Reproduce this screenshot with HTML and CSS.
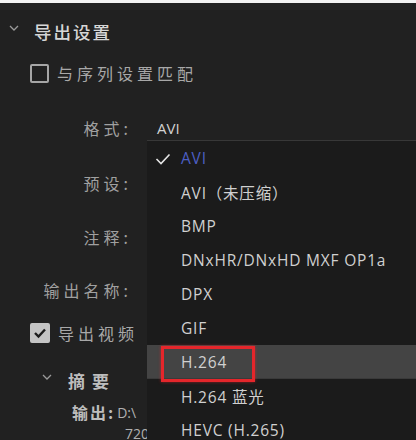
FILE: index.html
```html
<!DOCTYPE html>
<html>
<head>
<meta charset="utf-8">
<link rel="stylesheet" href="styles.css">
</head>
<body>
<div class="topbar"></div>
<div class="panel">
  <div class="row header">
    <svg class="chev" width="10" height="6" viewBox="0 0 10 6"><path d="M1 1 L5 5 L9 1" fill="none" stroke="#9a9a9a" stroke-width="1.3"/></svg>
    <span class="title">导出设置</span>
  </div>
  <div class="row match">
    <span class="box"></span>
    <span class="cbtext">与序列设置匹配</span>
  </div>
  <div class="row field r-format">
    <span class="label">格式:</span>
    <span class="value">AVI</span>
  </div>
  <div class="row field r-preset"><span class="label">预设:</span></div>
  <div class="row field r-note"><span class="label">注释:</span></div>
  <div class="row field r-name"><span class="label">输出名称:</span></div>
  <div class="row match r-video">
    <span class="box checked"><svg width="14" height="12" viewBox="0 0 14 12"><path d="M2 6 L5.5 9.5 L12 2.5" fill="none" stroke="#1d1d1d" stroke-width="2.4"/></svg></span>
    <span class="cbtext">导出视频</span>
  </div>
  <div class="row r-summary">
    <svg class="chev2" width="10" height="6" viewBox="0 0 10 6"><path d="M1 1 L5 5 L9 1" fill="none" stroke="#9a9a9a" stroke-width="1.3"/></svg>
    <span class="sumtitle">摘要</span>
  </div>
  <div class="row r-out"><span class="outlabel">输出:</span><span class="outval">D:\</span></div>
  <div class="row r-720"><span class="outval">720</span></div>
</div>

<div class="menu">
  <div class="item checked-item"><svg class="tick" width="16" height="12" viewBox="0 0 16 12"><path d="M1.5 6 L6 10.5 L14.5 1.5" fill="none" stroke="#e6e6e6" stroke-width="1.6"/></svg>AVI</div>
  <div class="item">AVI（未压缩）</div>
  <div class="item">BMP</div>
  <div class="item">DNxHR/DNxHD MXF OP1a</div>
  <div class="item">DPX</div>
  <div class="item">GIF</div>
  <div class="item hl">H.264<span class="redbox"></span></div>
  <div class="item">H.264 蓝光</div>
  <div class="item">HEVC (H.265)</div>
</div>
</body>
</html>
```
FILE: styles.css
```css
* { box-sizing: border-box; }
html, body {
  margin: 0;
  padding: 0;
  width: 416px;
  height: 440px;
  overflow: hidden;
  background: #212121;
  font-family: "Noto Sans CJK SC", "Noto Sans", sans-serif;
  color: #a8a8a8;
  position: relative;
}
.topbar { height: 3px; background: #f2f2f2; }
.panel { display: flex; flex-direction: column; }
.row { display: flex; align-items: center; height: 28px; }
.header { margin-top: 14px; }
.chev { margin-left: 9px; margin-right: 15px; margin-top: -6px; }
.title { font-size: 17.5px; letter-spacing: 2px; color: #d6d6d6; font-weight: 500; }
.match { margin-top: 14px; padding-left: 30px; }
.box {
  width: 19px; height: 19px;
  border: 2px solid #a6a6a6;
  border-radius: 2px;
  margin-right: 8px;
  display: flex; align-items: center; justify-content: center;
}
.box.checked { background: #c4c4c4; border-color: #c4c4c4; width: 20px; height: 20px; }
.cbtext { font-size: 16px; letter-spacing: 4px; color: #a8a8a8; }
.label {
  width: 132px;
  text-align: right;
  font-size: 16px;
  letter-spacing: 4px;
  color: #a0a0a0;
}
.value {
  margin-left: 25px;
  font-family: "Open Sans", "Noto Sans", sans-serif;
  font-size: 15px;
  color: #d2d2d2;
}
.r-format { margin-top: 27px; }
.r-preset { margin-top: 27px; }
.r-note { margin-top: 26px; }
.r-name { margin-top: 25px; }
.r-video { margin-top: 15px; }
.r-summary { margin-top: 19px; }
.chev2 { margin-left: 42px; margin-right: 16px; margin-top: -6px; }
.sumtitle { font-size: 17px; font-weight: bold; letter-spacing: 7px; color: #bdbdbd; }
.r-out { margin-top: 8px; height: 20px; padding-left: 72px; }
.outlabel { font-size: 16px; font-weight: bold; letter-spacing: 2px; color: #bdbdbd; }
.outval {
  font-family: "Open Sans", "Noto Sans", sans-serif;
  font-size: 14px;
  color: #b0b0b0;
  margin-left: 2px;
}
.r-720 { margin-top: 1px; height: 20px; padding-left: 123px; }

.menu {
  position: absolute;
  left: 147px;
  top: 140px;
  right: 0;
  height: 320px;
  background: #1b1b1b;
  border-top: 1px solid #383838;
}
.item {
  position: relative;
  height: 34px;
  display: flex;
  align-items: center;
  padding-left: 34px;
  font-family: "Open Sans", "Noto Sans CJK SC", sans-serif;
  font-size: 15.5px;
  letter-spacing: 0.8px;
  color: #d0d0d0;
}
.checked-item { color: #4d5fc4; }
.tick { position: absolute; left: 8px; top: 12px; }
.hl { background: #444444; border-bottom: 1px solid #3a3a3a; }
.redbox {
  position: absolute;
  left: 14px;
  top: 1px;
  width: 94px;
  height: 36px;
  border: 3px solid #e5262b;
  box-shadow: 0 0 3px rgba(229, 38, 43, 0.6);
}
```
